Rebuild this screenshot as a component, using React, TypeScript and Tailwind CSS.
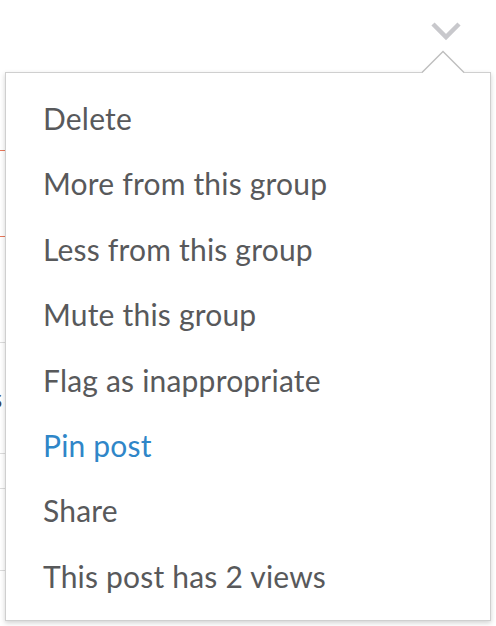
import React from "react";

const items: { label: string; blue?: boolean }[] = [
  { label: "Delete" },
  { label: "More from this group" },
  { label: "Less from this group" },
  { label: "Mute this group" },
  { label: "Flag as inappropriate" },
  { label: "Pin post", blue: true },
  { label: "Share" },
  { label: "This post has 2 views" },
];

export default function App() {
  return (
    <div
      className="relative w-[496px] h-[626px] bg-white overflow-hidden"
      style={{ fontFamily: "Lato, 'Noto Sans', sans-serif" }}
    >
      {/* background page fragments peeking out on the left, laid out in flow */}
      <div className="flex flex-col w-[8px]">
        <div className="h-[151px] border-b border-[#e8775a]" />
        <div className="h-[86px] border-b border-[#e8775a]" />
        <div className="h-[106px] border-b border-[#dcdcdc]" />
        <div className="h-[111px] border-b border-[#dcdcdc] pt-[42px] overflow-visible">
          <span className="block ml-[-9px] text-[26px] leading-none text-[#3c4452]">s</span>
        </div>
        <div className="h-[35px] border-b border-[#dcdcdc]" />
        <div className="h-[82px] border-b border-[#dcdcdc]" />
      </div>

      {/* chevron toggle */}
      <svg
        className="absolute left-[430px] top-[20px]"
        width="32"
        height="24"
        viewBox="0 0 32 24"
      >
        <polyline
          points="3,4 16,17 29,4"
          fill="none"
          stroke="#c8c8cc"
          strokeWidth="4.5"
        />
      </svg>

      {/* dropdown menu */}
      <div className="absolute left-[5px] top-[72px] w-[486px] h-[549px] bg-white border border-[#cfcfcf] shadow-[0_2px_5px_rgba(0,0,0,0.18)]">
        <ul className="flex flex-col pt-[13px] pl-[37px]">
          {items.map((it) => (
            <li
              key={it.label}
              className={`text-[30px] leading-[65.4px] tracking-[0.2px] ${it.blue ? "text-[#2f86c8]" : "text-[#58595b]"}`}
            >
              {it.label}
            </li>
          ))}
        </ul>
      </div>

      {/* caret */}
      <svg
        className="absolute left-[420px] top-[50px]"
        width="46"
        height="24"
        viewBox="0 0 46 24"
      >
        <polygon points="2,23 23,2 44,23" fill="#ffffff" />
        <polyline points="2,22.5 23,1.5 44,22.5" fill="none" stroke="#bdbdbd" strokeWidth="1.3" />
      </svg>
    </div>
  );
}
